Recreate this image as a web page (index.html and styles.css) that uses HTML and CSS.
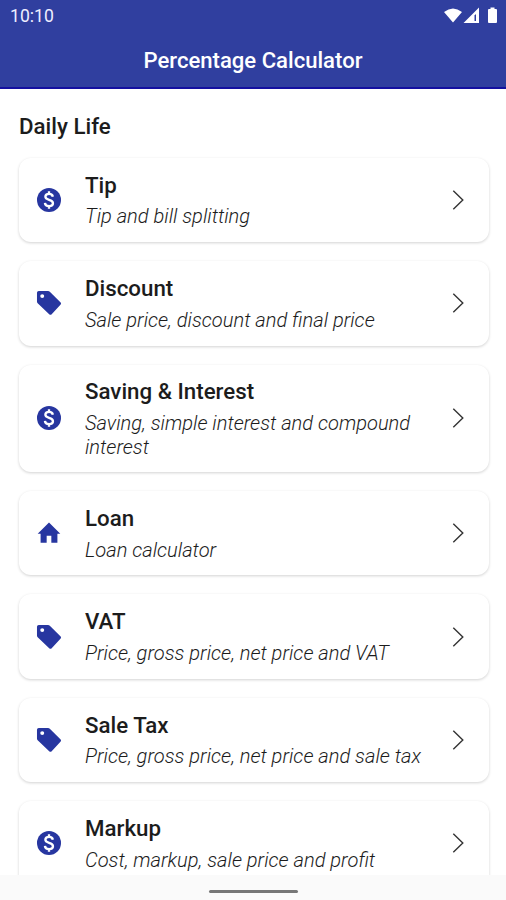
FILE: index.html
```html
<!DOCTYPE html>
<html lang="en">
<head>
<meta charset="utf-8">
<title>Percentage Calculator</title>
<link rel="stylesheet" href="styles.css">
</head>
<body>
<svg class="defs">
  <symbol id="dollar" viewBox="0 0 24 24"><circle cx="12" cy="12" r="10.300"/><path d="M15.300 9.200C15 7.500 13.800 6.800 12.100 6.800c-1.900 0-3.200.9-3.200 2.400 0 3.300 6.500 1.900 6.500 5.500 0 1.600-1.400 2.500-3.300 2.500-2 0-3.400-.9-3.600-2.800M12 4.500v2.500M12 17v2.500" fill="none" stroke="#fff" stroke-width="2"/></symbol>
  <symbol id="tag" viewBox="0 0 24 24"><path fill-rule="evenodd" d="M3.200 1.700H11.200Q12 1.700 12.700 2.300L22 11.600Q22.700 12.500 22 13.300L14.100 21.800Q13.300 22.500 12.400 21.800L2.300 12.200Q1.700 11.500 1.700 10.700V3.200Q1.700 1.700 3.200 1.700zM6.200 4.400a1.700 1.700 0 1 0 0 3.400 1.700 1.700 0 0 0 0-3.400z"/></symbol>
  <symbol id="home" viewBox="0 0 24 24"><path d="M10 20.400v-6h4v6h5.200v-7.800h2.500L12 3.100 2.300 12.600h2.500v7.800z"/></symbol>
  <symbol id="chevron" viewBox="0 0 12 20"><path d="M1.300 .8l9.500 9.200L1.300 19.200" fill="none" stroke="#333" stroke-width="1.400"/></symbol>
</svg>
<header class="top">
  <div class="status">
    <span>10:10</span>
    <svg class="status-icons" viewBox="0 0 56 18"><path d="M1 5Q10-2 19 5L10 15.500zM36 .5v15.500H20.500zM45 3q0-1 1-1h1.500V.5h4V2H53q1 0 1 1v12q0 1-1 1h-7q-1 0-1-1z" fill="#fff"/><path d="M33 7v7h-1.500V8.500z" fill="#303f9f"/></svg>
  </div>
  <h1>Percentage Calculator</h1>
</header>
<main>
  <h2>Daily Life</h2>
  <div class="list">
    <article class="card"><svg class="icon"><use href="#dollar"/></svg><div class="text"><h3>Tip</h3><p>Tip and bill splitting</p></div><svg class="chevron"><use href="#chevron"/></svg></article>
    <article class="card"><svg class="icon"><use href="#tag"/></svg><div class="text"><h3>Discount</h3><p>Sale price, discount and final price</p></div><svg class="chevron"><use href="#chevron"/></svg></article>
    <article class="card"><svg class="icon"><use href="#dollar"/></svg><div class="text"><h3>Saving &amp; Interest</h3><p>Saving, simple interest and compound interest</p></div><svg class="chevron"><use href="#chevron"/></svg></article>
    <article class="card"><svg class="icon"><use href="#home"/></svg><div class="text"><h3>Loan</h3><p>Loan calculator</p></div><svg class="chevron"><use href="#chevron"/></svg></article>
    <article class="card"><svg class="icon"><use href="#tag"/></svg><div class="text"><h3>VAT</h3><p>Price, gross price, net price and VAT</p></div><svg class="chevron"><use href="#chevron"/></svg></article>
    <article class="card"><svg class="icon"><use href="#tag"/></svg><div class="text"><h3>Sale Tax</h3><p>Price, gross price, net price and sale tax</p></div><svg class="chevron"><use href="#chevron"/></svg></article>
    <article class="card"><svg class="icon"><use href="#dollar"/></svg><div class="text"><h3>Markup</h3><p>Cost, markup, sale price and profit</p></div><svg class="chevron"><use href="#chevron"/></svg></article>
  </div>
</main>
<footer class="nav"><div class="handle"></div></footer>
</body>
</html>
```
FILE: styles.css
```css
* { box-sizing: border-box; }
body { margin: 0; height: 900px; display: flex; flex-direction: column; overflow: hidden; background: #fff; color: #1c1c1c; font-family: Roboto, sans-serif; }
.defs { display: none; }
h1, h2, h3, p { margin: 0; }
.top { flex: none; height: 89px; background: #303f9f; color: #fff; border-bottom: 2px solid #1410a0; }
.status { height: 32px; padding: 0 7px 0 10px; display: flex; align-items: center; justify-content: space-between; font-size: 17.600px; color: #eef; }
.status-icons { width: 56px; height: 18px; }
h1 { font-size: 22.100px; line-height: 56px; font-weight: 500; text-align: center; }
main { flex: 1; min-height: 0; overflow: hidden; padding: 23px 17px 0 19px; }
h2 { font-size: 22.300px; line-height: 28px; font-weight: 500; margin-bottom: 17.800px; }
.list { display: flex; flex-direction: column; gap: 19px; }
.card { flex: none; display: flex; align-items: center; min-height: 84.400px; padding: 12.400px 25px 13.200px 16px; border-radius: 12px; background: #fff; box-shadow: 0 1px 3px rgba(0,0,0,.18); }
.icon { flex: none; width: 28px; height: 28px; fill: #2736a0; margin: 1px 22px 0 0; }
.text { flex: 1; }
h3 { font-size: 22.300px; line-height: 28px; font-weight: 500; }
p { font-size: 20.080px; line-height: 24px; font-style: italic; font-weight: 300; margin-top: 5.800px; }
.chevron { flex: none; width: 12px; height: 20px; margin-top: 1px; }
.nav { flex: none; height: 25px; background: #fafafa; display: flex; justify-content: center; padding-top: 15px; }
.handle { width: 89px; height: 3px; border-radius: 2px; background: #777; }
```
